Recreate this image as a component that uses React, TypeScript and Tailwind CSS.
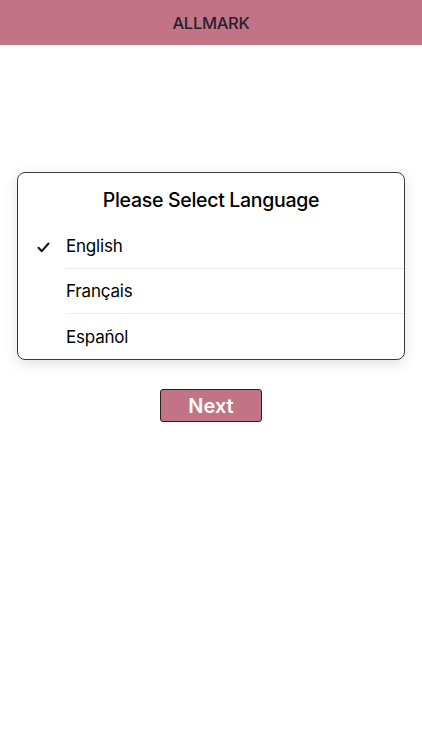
import { useState } from "react";

const languages = ["English", "Français", "Español"];

const App = () => {
  const [selected, setSelected] = useState("English");

  return (
    <div className="min-h-screen bg-white font-['Inter','Noto_Sans',sans-serif]">
      <header className="h-[45px] bg-[#c07485] flex items-center justify-center">
        <h1 className="text-[16.5px] font-medium text-[#2a1f2d] tracking-[-0.3px] pt-[1px]">ALLMARK</h1>
      </header>

      <div className="mx-[17px] mt-[127px] rounded-[8px] border border-[#3a3a3a] bg-white shadow-[0_4px_14px_rgba(0,0,0,0.12)] overflow-hidden">
        <div className="h-[51px] flex items-center justify-center pt-[5px]">
          <h2 className="text-[19.5px] font-medium text-black tracking-[-0.3px]">Please Select Language</h2>
        </div>
        <ul>
          {languages.map((lang, i) => (
            <li
              key={lang}
              onClick={() => setSelected(lang)}
              className="flex h-[45px] cursor-pointer"
            >
              <div className="w-[48px] flex items-center justify-center pl-[2px] pt-[2px]">
                {selected === lang && (
                  <svg width="13" height="11" viewBox="0 0 13 11" fill="none">
                    <path d="M1.5 5.8 L4.8 9.2 L11.5 1.5" stroke="#111" strokeWidth="2" strokeLinecap="round" strokeLinejoin="round" />
                  </svg>
                )}
              </div>
              <div className={`flex-1 flex items-center pt-[2px] ${i < languages.length - 1 ? "border-b border-[#ececec]" : ""}`}>
                <span className="text-[17px] text-black tracking-[-0.2px]">{lang}</span>
              </div>
            </li>
          ))}
        </ul>
      </div>

      <div className="flex justify-center mt-[29px]">
        <button
          type="button"
          className="w-[102px] h-[33px] bg-[#c07485] border border-[#2a1f24] rounded-[3px] text-white text-[20px] font-semibold leading-none"
        >
          Next
        </button>
      </div>
    </div>
  );
};

export default App;
